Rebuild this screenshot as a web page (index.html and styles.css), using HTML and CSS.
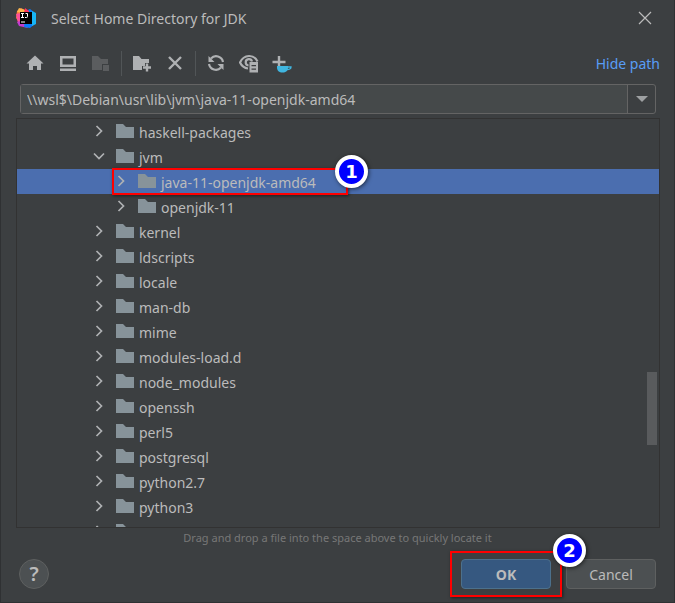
FILE: index.html
```html
<!DOCTYPE html>
<html lang="en">
<head>
  <meta charset="UTF-8">
  <meta name="viewport" content="width=device-width, initial-scale=1.0">
  <title>Select Home Directory for JDK</title>
  <link rel="stylesheet" href="styles.css">
</head>
<body>
  <svg class="symbols" aria-hidden="true">
    <symbol id="folder" viewBox="0 0 18 14">
      <path d="M0 0h7l3 3h8v11H0z" fill="#87939a"/>
    </symbol>
    <symbol id="right" viewBox="0 0 14 14">
      <path d="M4.500 2l5 5-5 5" fill="none" stroke="#afb1b3" stroke-width="1.700"/>
    </symbol>
    <symbol id="down" viewBox="0 0 14 14">
      <path d="M2 4.500l5 5 5-5" fill="none" stroke="#afb1b3" stroke-width="1.700"/>
    </symbol>
  </svg>

  <main class="dialog">
    <header class="titlebar">
      <svg class="logo" viewBox="0 0 20 20" aria-hidden="true">
        <path d="M1 3l4-3 6 3-2 9-7 1-2-3z" fill="#f97a3c"/>
        <path d="M0 6l5-1 4 9-7 1z" fill="#fc4f9a"/>
        <path d="M1 14l6-2 5 8-9-2z" fill="#c23bd0"/>
        <path d="M3 0l6 2-2 3-6-1z" fill="#fdb64d"/>
        <path d="M10 3l4-2 5 4 1 10-6 5-6-1z" fill="#087cfa"/>
        <path d="M16 3l4 2v11l-4 2z" fill="#18b5f5"/>
        <path d="M9 0l4 3v4H8z" fill="#fe315d"/>
        <path d="M4 4h12v12H4z" fill="#000"/>
        <path d="M5 5.500h3M6.500 5.500v4M5 9.500h3M9.500 5.500h2v3q0 1-1 1H9M5 14h4" fill="none" stroke="#fff" stroke-width="1"/>
      </svg>
      <h1 class="title">Select Home Directory for JDK</h1>
      <button class="close" type="button" aria-label="Close">
        <svg width="14" height="14" viewBox="0 0 14 14"><path d="M1 1l12 12M13 1L1 13" fill="none" stroke="#bbb" stroke-width="1.200"/></svg>
      </button>
    </header>

    <div class="toolbar">
      <button class="tool" type="button" aria-label="Home">
        <svg viewBox="0 0 20 20"><path d="M10 2.500l8.500 8H16V17h-4v-4H8v4H4v-6.500H1.500z" fill="#afb1b3"/></svg>
      </button>
      <button class="tool" type="button" aria-label="Desktop">
        <svg viewBox="0 0 20 20"><path d="M2 3h16v11H2zM4.500 5.500v6h11v-6zM2 15.500h16V18H2z" fill="#afb1b3" fill-rule="evenodd"/></svg>
      </button>
      <button class="tool" type="button" aria-label="Project directory" disabled>
        <svg viewBox="0 0 20 20"><path d="M1 3h6l3 3h7v5h-6v6H1z" fill="#5b5d5f"/><path d="M12 12h6v6h-6z" fill="#5b5d5f"/></svg>
      </button>
      <span class="separator"></span>
      <button class="tool" type="button" aria-label="New folder">
        <svg viewBox="0 0 20 20"><path d="M1 3h6l2.500 3H17v4h-4v3h-3v4H1z" fill="#afb1b3"/><path d="M15 10.500v8M11 14.500h8" fill="none" stroke="#afb1b3" stroke-width="2.400"/></svg>
      </button>
      <button class="tool" type="button" aria-label="Delete">
        <svg viewBox="0 0 20 20"><path d="M4 4l12 12M16 4L4 16" fill="none" stroke="#afb1b3" stroke-width="2.400"/></svg>
      </button>
      <span class="separator"></span>
      <button class="tool" type="button" aria-label="Refresh">
        <svg viewBox="0 0 20 20"><path d="M17 9A7 7 0 0 0 5 5.500M3 11A7 7 0 0 0 15 14.500" fill="none" stroke="#afb1b3" stroke-width="2.200"/><path d="M2.500 3v6h6zM17.500 17v-6h-6z" fill="#afb1b3"/></svg>
      </button>
      <button class="tool" type="button" aria-label="Show hidden files">
        <svg viewBox="0 0 20 20"><path d="M9 15.500C5 15 2.500 12.500 1 9.500 5 1 15 1 18.500 8.500" fill="none" stroke="#afb1b3" stroke-width="2.200"/><path d="M9.500 12.500A3.200 3.200 0 1 1 13 8.500" fill="none" stroke="#afb1b3" stroke-width="2.200"/><path d="M10.500 9H19v10.500h-8.500zM12.500 12v1.300H17V12zM12.500 15.500v1.300H17v-1.300z" fill="#afb1b3" fill-rule="evenodd"/></svg>
      </button>
      <button class="tool" type="button" aria-label="Add JDK">
        <svg viewBox="0 0 20 20"><path d="M7 3v11M.500 9h13" fill="none" stroke="#afb1b3" stroke-width="2.400"/><path d="M5 13h11v1.500c0 3-2 5-5.500 5s-5.500-2-5.500-5z" fill="#40b6e0"/><path d="M15 14h4c0 2-1.500 2.500-4 2.500" fill="none" stroke="#40b6e0" stroke-width="1.300"/></svg>
      </button>
      <a class="hide-path" href="#path">Hide path</a>
    </div>

    <div class="path">
      <input class="path-input" id="path" type="text" aria-label="Path" value="\\wsl$\Debian\usr\lib\jvm\java-11-openjdk-amd64">
      <button class="path-history" type="button" aria-label="Recent paths">
        <svg width="12" height="8" viewBox="0 0 12 8"><path d="M0 1h12L6 7z" fill="#9da0a2"/></svg>
      </button>
    </div>

    <div class="tree">
      <ul class="rows">
        <li class="row"><svg class="arrow"><use href="#right"/></svg><svg class="folder"><use href="#folder"/></svg>haskell-packages</li>
        <li class="row"><svg class="arrow"><use href="#down"/></svg><svg class="folder"><use href="#folder"/></svg>jvm</li>
        <li class="row nested selected">
          <span class="mark mark-row"><span class="badge">1</span></span>
          <svg class="arrow"><use href="#right"/></svg><svg class="folder"><use href="#folder"/></svg>java-11-openjdk-amd64
        </li>
        <li class="row nested"><svg class="arrow"><use href="#right"/></svg><svg class="folder"><use href="#folder"/></svg>openjdk-11</li>
        <li class="row"><svg class="arrow"><use href="#right"/></svg><svg class="folder"><use href="#folder"/></svg>kernel</li>
        <li class="row"><svg class="arrow"><use href="#right"/></svg><svg class="folder"><use href="#folder"/></svg>ldscripts</li>
        <li class="row"><svg class="arrow"><use href="#right"/></svg><svg class="folder"><use href="#folder"/></svg>locale</li>
        <li class="row"><svg class="arrow"><use href="#right"/></svg><svg class="folder"><use href="#folder"/></svg>man-db</li>
        <li class="row"><svg class="arrow"><use href="#right"/></svg><svg class="folder"><use href="#folder"/></svg>mime</li>
        <li class="row"><svg class="arrow"><use href="#right"/></svg><svg class="folder"><use href="#folder"/></svg>modules-load.d</li>
        <li class="row"><svg class="arrow"><use href="#right"/></svg><svg class="folder"><use href="#folder"/></svg>node_modules</li>
        <li class="row"><svg class="arrow"><use href="#right"/></svg><svg class="folder"><use href="#folder"/></svg>openssh</li>
        <li class="row"><svg class="arrow"><use href="#right"/></svg><svg class="folder"><use href="#folder"/></svg>perl5</li>
        <li class="row"><svg class="arrow"><use href="#right"/></svg><svg class="folder"><use href="#folder"/></svg>postgresql</li>
        <li class="row"><svg class="arrow"><use href="#right"/></svg><svg class="folder"><use href="#folder"/></svg>python2.7</li>
        <li class="row"><svg class="arrow"><use href="#right"/></svg><svg class="folder"><use href="#folder"/></svg>python3</li>
        <li class="row"><svg class="arrow"><use href="#right"/></svg><svg class="folder"><use href="#folder"/></svg></li>
      </ul>
      <span class="scrollbar"></span>
    </div>

    <p class="hint">Drag and drop a file into the space above to quickly locate it</p>

    <footer class="actions">
      <button class="help" type="button" aria-label="Help">?</button>
      <div class="ok-wrap">
        <button class="button primary" type="button">OK</button>
        <span class="mark mark-ok"><span class="badge">2</span></span>
      </div>
      <button class="button" type="button">Cancel</button>
    </footer>
  </main>
</body>
</html>
```

FILE: styles.css
```css
* {
  box-sizing: border-box;
}

body {
  margin: 0;
  background: #3c3f41;
  color: #bbbbbb;
  font-family: "Segoe UI", "Noto Sans", "Open Sans", sans-serif;
  font-size: 14px;
}

button,
input {
  font: inherit;
  color: inherit;
}

.symbols {
  display: none;
}

.dialog {
  display: flex;
  flex-direction: column;
  height: 100vh;
  border: 1px solid #2f3133;
  border-top: 0;
}

/* Title bar */
.titlebar {
  display: flex;
  align-items: center;
  height: 36px;
  padding: 0 14px 0 15px;
}

.logo {
  width: 20px;
  height: 20px;
  margin-right: 15px;
}

.title {
  flex: 1;
  margin: 0;
  font-size: 14px;
  font-weight: 400;
}

.close {
  display: flex;
  padding: 8px;
  border: 0;
  background: none;
}

/* Toolbar */
.toolbar {
  display: flex;
  align-items: center;
  gap: 1px;
  height: 48px;
  padding: 6px 14px 0 18px;
}

.tool {
  display: flex;
  align-items: center;
  justify-content: center;
  width: 32px;
  height: 32px;
  padding: 0;
  border: 0;
  background: none;
}

.tool svg {
  width: 20px;
  height: 20px;
}

.separator {
  width: 1px;
  height: 25px;
  margin: 0 3px;
  background: #515557;
}

.hide-path {
  margin-left: auto;
  color: #589df6;
  text-decoration: none;
}

/* Path field */
.path {
  display: flex;
  height: 30px;
  margin: 0 18px 4px 19px;
  border: 1px solid #646464;
  border-radius: 3px;
}

.path-input {
  flex: 1;
  min-width: 0;
  padding: 0 6px;
  border: 0;
  outline: 0;
  background: #45494a;
}

.path-history {
  display: flex;
  align-items: center;
  justify-content: center;
  width: 28px;
  padding: 0;
  border: 0;
  border-left: 1px solid #646464;
  background: none;
}

/* Folder tree */
.tree {
  position: relative;
  flex: 1;
  min-height: 0;
  margin: 0 14px 0 15px;
  border: 1px solid #323232;
  overflow: hidden;
}

.rows {
  margin: 0;
  padding: 0;
  list-style: none;
}

.row {
  position: relative;
  display: flex;
  align-items: center;
  height: 25px;
  padding-top: 1px;
  padding-left: 75px;
}

.nested {
  padding-left: 97px;
}

.selected {
  background: #4b6eaf;
}

.arrow {
  width: 14px;
  height: 14px;
  margin: 0 10px 2px 0;
}

.folder {
  width: 18px;
  height: 14px;
  margin: 0 5px 2px 0;
}

.scrollbar {
  position: absolute;
  right: 2px;
  bottom: 82px;
  width: 10px;
  height: 73px;
  background: #595b5d;
}

.hint {
  margin: 0;
  color: #777777;
  font-size: 11px;
  line-height: 20px;
  text-align: center;
}

/* Bottom buttons */
.actions {
  display: flex;
  align-items: center;
  gap: 15px;
  padding: 11px 18px 13px;
}

.help {
  width: 30px;
  height: 30px;
  margin-right: auto;
  padding: 0;
  border: 1px solid #5e6060;
  border-radius: 50%;
  background: #4c5052;
  font-size: 20px;
  font-weight: 600;
  line-height: 28px;
}

.button {
  display: block;
  width: 90px;
  height: 30px;
  padding: 0;
  border: 1px solid #5e6060;
  border-radius: 4px;
  background: #4c5052;
}

.primary {
  border-color: #4c708c;
  background: #365880;
  font-weight: 700;
}

.ok-wrap {
  position: relative;
}

/* Numbered step marks */
.mark {
  position: absolute;
  z-index: 1;
  border: 2px solid #ff0000;
  box-shadow: 1px 1px 3px rgba(0, 0, 0, 0.5);
}

.mark-row {
  top: -1px;
  bottom: -1px;
  left: 95px;
  width: 236px;
}

.mark-ok {
  inset: -8px -11px;
  pointer-events: none;
}

.badge {
  position: absolute;
  top: -15px;
  right: -22px;
  width: 33px;
  height: 33px;
  border: 4px solid #ffffff;
  border-radius: 50%;
  background: #0000ff;
  box-shadow: 1px 1px 4px rgba(0, 0, 0, 0.6);
  color: #ffffff;
  font-family: "DejaVu Sans", sans-serif;
  font-size: 18px;
  font-weight: 700;
  line-height: 25px;
  text-align: center;
}

.mark-ok .badge {
  top: -19px;
  right: -26px;
}
```
